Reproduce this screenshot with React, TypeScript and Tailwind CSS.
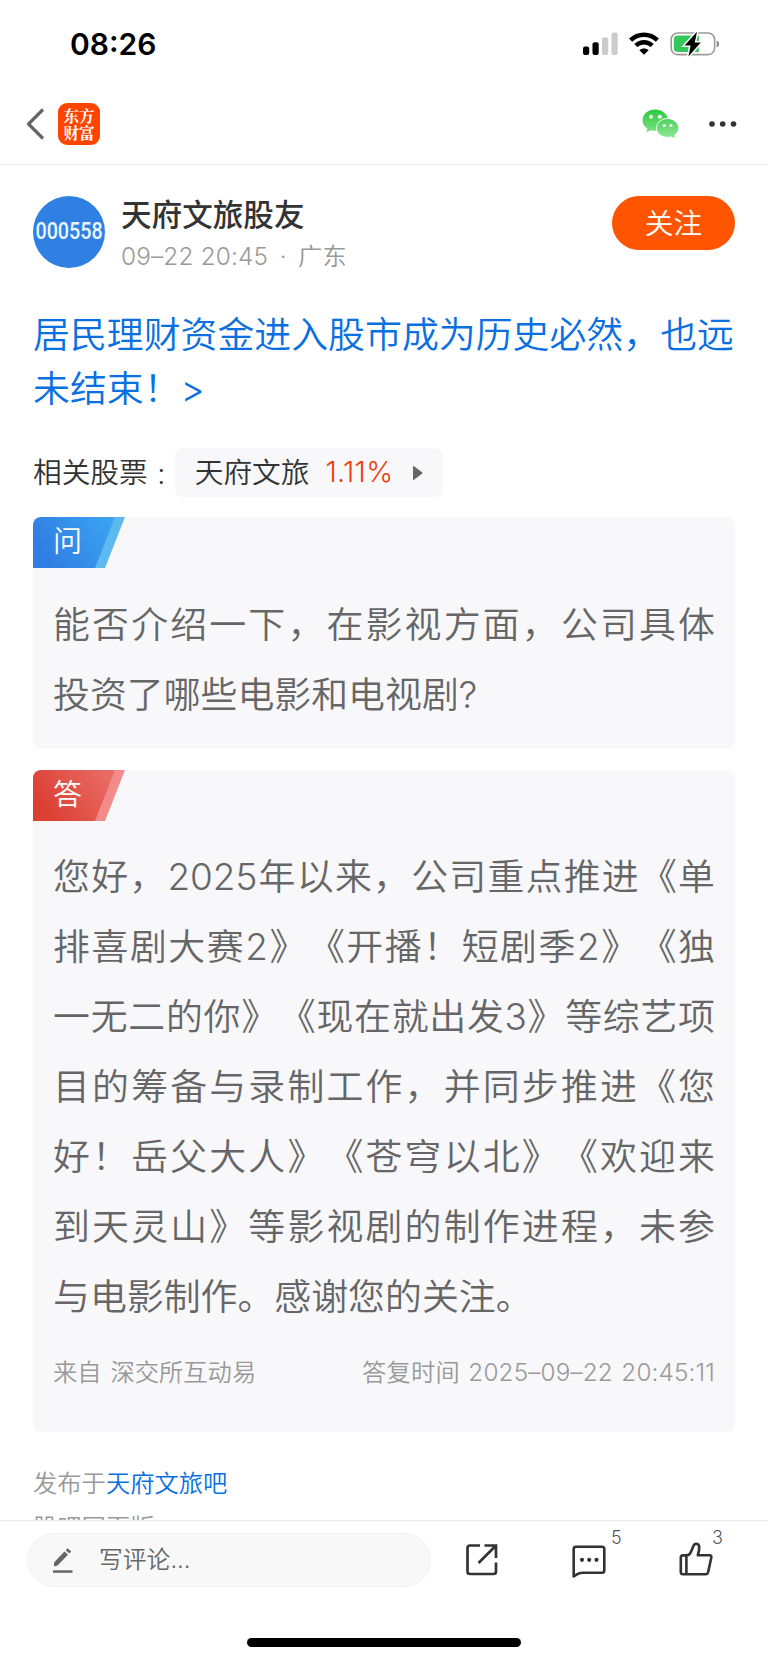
import React from "react";

function SignalIcon() {
  return (
    <svg width="36" height="24" viewBox="0 0 36 24">
      <rect x="1" y="14.5" width="6.2" height="8.5" rx="2" fill="#000" />
      <rect x="10.5" y="10.2" width="6.2" height="12.8" rx="2" fill="#000" />
      <rect x="20" y="5.3" width="6.2" height="17.7" rx="2" fill="#ccc" />
      <rect x="29.5" y="0.5" width="6.2" height="22.5" rx="2" fill="#ccc" />
    </svg>
  );
}

function WifiIcon() {
  return (
    <svg width="30" height="24" viewBox="0 0 30 24" fill="none" stroke="#000" strokeWidth="4.4">
      <path d="M1.6 8.2C9.2 .9 20.8 .9 28.4 8.2" />
      <path d="M6.8 13.5C11.6 9.1 18.4 9.1 23.2 13.5" />
      <path d="M15 22.8L10.4 18.2C12.9 15.8 17.1 15.8 19.6 18.2Z" fill="#000" stroke="none" />
    </svg>
  );
}

function BatteryIcon() {
  return (
    <svg width="50" height="26" viewBox="0 0 50 26">
      <rect x="1.2" y="2" width="43.4" height="21.6" rx="6.5" fill="none" stroke="#9b9b9b" strokeWidth="1.6" />
      <path d="M46.6 9.4C50 10.4 50 15.4 46.6 16.4Z" fill="#8e8e8e" />
      <path d="M8 4.6H28.8V21H8Q3.8 21 3.8 17V8.600Q3.800 4.600 8 4.600Z" fill="#34c759" />
      <path d="M27 .8L14.600 14.500H20.600L18.400 25.400L30.800 11.400H24.800Z" fill="#000" stroke="#fff" strokeWidth="3" paintOrder="stroke" />
    </svg>
  );
}

function WechatIcon() {
  return (
    <svg width="37" height="30" viewBox="0 0 37 30">
      <defs>
        <linearGradient id="wx" x1="0" y1="0" x2="0" y2="30" gradientUnits="userSpaceOnUse">
          <stop offset="0" stopColor="#28c93a" />
          <stop offset="1" stopColor="#93e89a" />
        </linearGradient>
      </defs>
      <path d="M13.200 .5C6.200 .5 .5 5.200 .5 11.200C.5 14.600 2.400 17.600 5.400 19.500L4.300 23.400L8.800 21.200C10.200 21.600 11.700 21.800 13.200 21.800C20.200 21.800 25.900 17.100 25.900 11.200S20.200 .5 13.200 .5Z" fill="url(#wx)" />
      <path d="M25.500 9.900C19.600 9.900 14.900 13.900 14.900 18.900S19.600 27.900 25.500 27.900C26.800 27.900 28 27.700 29.200 27.400L33 29.200L32.200 26C34.700 24.300 36.300 21.800 36.300 18.900C36.300 13.900 31.500 9.900 25.500 9.900Z" fill="url(#wx)" stroke="#fff" strokeWidth="1.600" paintOrder="stroke" />
      <circle cx="9" cy="7.700" r="2" fill="#fff" />
      <circle cx="17.800" cy="7.700" r="2" fill="#fff" />
      <circle cx="22.200" cy="16.400" r="1.500" fill="#fff" />
      <circle cx="29" cy="16.400" r="1.500" fill="#fff" />
    </svg>
  );
}

function StatusBar() {
  return (
    <div className="flex h-[88px] items-center pl-[70px] pr-[48px]">
      <span className="text-[30px] font-semibold leading-none text-black">08:26</span>
      <div className="ml-auto flex items-center gap-[11px]">
        <SignalIcon />
        <WifiIcon />
        <BatteryIcon />
      </div>
    </div>
  );
}

function NavBar() {
  return (
    <header className="flex h-[77px] items-center border-b border-[#e6e6e6] pb-[4px] pl-[26px] pr-[30px]">
      <svg width="19" height="32" viewBox="0 0 19 32" fill="none" stroke="#666" strokeWidth="3.200">
        <path d="M17 1.500L2.500 16L17 30.500" strokeLinejoin="round" />
      </svg>
      <div className="ml-[13px] flex size-[42px] flex-col items-center justify-center rounded-[9px] bg-[#ff4400] font-[Noto_Serif_CJK_SC,Noto_Sans_CJK_SC,sans-serif] text-[15.500px] font-bold leading-[17.500px] text-white">
        <span>东方</span>
        <span>财富</span>
      </div>
      <div className="ml-auto">
        <WechatIcon />
      </div>
      <svg className="ml-[29px]" width="30" height="8" viewBox="0 0 30 8" fill="#333">
        <circle cx="4" cy="4" r="2.800" />
        <circle cx="14.700" cy="4" r="2.800" />
        <circle cx="25.500" cy="4" r="2.800" />
      </svg>
    </header>
  );
}

function Tag({ label, id, from, to, edge }: { label: string; id: string; from: string; to: string; edge: string }) {
  return (
    <div className="relative h-[51px] w-[92px]">
      <svg className="absolute inset-0" width="92" height="51" viewBox="0 0 92 51">
        <defs>
          <linearGradient id={id} x1="0" y1="0.400" x2="1" y2="0">
            <stop offset="0" stopColor={from} />
            <stop offset="1" stopColor={to} />
          </linearGradient>
        </defs>
        <path d="M70 0H92L72 51H50Z" fill={edge} />
        <path d="M0 0H82L62 51H0Z" fill={`url(#${id})`} />
      </svg>
      <span className="relative block pl-[20px] text-[29px] leading-[50px] text-white">{label}</span>
    </div>
  );
}

function Lines({ lines }: { lines: string[] }) {
  return (
    <div className="px-[20px] text-[36.900px] leading-[70px] text-[#666]">
      {lines.map((line, i) => (
        <p
          key={line}
          className={
            i < lines.length - 1
              ? "h-[70px] whitespace-nowrap [text-align-last:justify]"
              : "h-[70px] whitespace-nowrap"
          }
        >
          {line}
        </p>
      ))}
    </div>
  );
}

const answer = [
  "您好，2025年以来，公司重点推进《单",
  "排喜剧大赛2》《开播！短剧季2》《独",
  "一无二的你》《现在就出发3》等综艺项",
  "目的筹备与录制工作，并同步推进《您",
  "好！岳父大人》《苍穹以北》《欢迎来",
  "到天灵山》等影视剧的制作进程，未参",
  "与电影制作。感谢您的关注。",
];

function BottomBar() {
  return (
    <footer className="h-[142px] border-t border-[#ededed] bg-white pt-[12px]">
      <div className="flex h-[54px] items-center pl-[27px]">
        <div className="flex h-[54px] w-[404px] items-center rounded-full border border-[#f3f3f3] bg-[#f8f8f8] pl-[25px]">
          <svg width="20" height="28" viewBox="0 0 20 28" fill="#666">
            <path d="M1 20.500V16.500L11.500 5.500L15 8.700L4.500 19.500Z" />
            <path d="M12.700 4.300L14.700 2.200L18.200 5.400L16.200 7.500Z" />
            <rect x="0" y="24.300" width="19.500" height="2.500" />
          </svg>
          <span className="ml-[26px] text-[23.800px] leading-none text-[#666]">写评论...</span>
        </div>
        <svg className="ml-[34px]" width="34" height="34" viewBox="0 0 34 34" fill="none" stroke="#333" strokeWidth="2.700">
          <path d="M15 2.500H5Q2.500 2.500 2.500 5V28.500Q2.500 31 5 31H28.500Q31 31 31 28.500V19.500" />
          <path d="M19.500 2.500H31V15M31 2.500L13.500 20" />
        </svg>
        <div className="relative ml-[72px] h-[36px] w-[36px]">
          <svg className="absolute left-0 top-0" width="36" height="36" viewBox="0 0 36 36" fill="none" stroke="#333" strokeWidth="2.600">
            <path d="M2.700 34V7Q2.700 4.700 5 4.700H31Q33.300 4.700 33.300 7V28.500Q33.300 30.800 31 30.800H12Q8 30.800 5.500 32.600L2.700 34.500Z" strokeLinejoin="round" />
            <g fill="#333" stroke="none">
              <circle cx="11" cy="17.800" r="2.100" />
              <circle cx="18.200" cy="17.800" r="2.100" />
              <circle cx="25.500" cy="17.800" r="2.100" />
            </g>
          </svg>
          <span className="absolute left-[40px] top-[-15px] text-[18px] leading-[22px] text-[#555]">5</span>
        </div>
        <div className="relative ml-[71px] h-[36px] w-[36px]">
          <svg className="absolute left-0 top-0" width="36" height="36" viewBox="0 0 36 36" fill="none" stroke="#333" strokeWidth="2.600" strokeLinejoin="round">
            <path d="M9 13.400H5Q2.800 13.400 2.800 15.600V30Q2.800 32.300 5 32.300H27.500Q29.600 32.300 30.100 30.300L33.300 15.500Q33.700 13.200 31.500 13.200H19.800Q21.500 8.500 21.200 4.500Q20.800 1.800 18.300 1.800Q16.300 1.800 15.300 4.300Q13.500 9 12.300 11.200Q11.200 13.400 8.400 13.400V32.300" />
          </svg>
          <span className="absolute left-[34px] top-[-15px] text-[18px] leading-[22px] text-[#555]">3</span>
        </div>
      </div>
      <div className="mx-auto mt-[51px] h-[9px] w-[274px] rounded-full bg-black" />
    </footer>
  );
}

export default function App() {
  return (
    <div
      lang="zh-CN"
      className="flex h-[1662px] w-[768px] flex-col overflow-hidden bg-white font-[Inter,Noto_Sans_CJK_SC,sans-serif] font-[350] [text-spacing-trim:space-all]"
    >
      <StatusBar />
      <NavBar />
      <main className="h-[1355px] overflow-hidden px-[33px] pt-[31px]">
        <section className="flex h-[72px]">
          <div className="flex size-[72px] items-center justify-center rounded-full bg-[#3080e4]">
            <span className="origin-center scale-x-[0.840] font-[Roboto,sans-serif] text-[23.500px] font-medium leading-none text-[#eaf6ff]">000558</span>
          </div>
          <div className="ml-[16px]">
            <div className="text-[30.600px] font-medium leading-[38px] text-[#333]">天府文旅股友</div>
            <div className="mt-[3px] text-[24.300px] leading-[38px] text-[#999]">
              <span className="tracking-[0.200px]">09–22 20:45</span>
              <span className="inline-block w-[30px] text-center">·</span>广东
            </div>
          </div>
          <button className="ml-auto h-[54px] w-[123px] rounded-full bg-[#ff5500] text-[28.700px] leading-[55px] text-white">关注</button>
        </section>
        <h1 className="mt-[40px] whitespace-nowrap text-[36.900px] leading-[54px] text-[#0a6fe0]">
          居民理财资金进入股市成为历史必然，也远
          <br />
          未结束！&gt;
        </h1>
        <div className="mt-[32px] flex h-[49px] items-center text-[28.700px] leading-none text-[#333]">
          <span className="pt-px">相关股票</span>
          <span className="w-[27px] pt-[3px] text-center">:</span>
          <div className="flex h-[49px] w-[268px] items-center rounded-[8px] bg-[#f8f8fb] pl-[20px]">
            <span className="pt-px">天府文旅</span>
            <span className="ml-[16px] tracking-[0.300px] text-[#ea3f0c]">1.11%</span>
            <svg className="ml-auto mr-[20px]" width="11" height="16" viewBox="0 0 11 16">
              <path d="M1 1.500Q1 .5 2 1.200L10 7.300Q10.600 8 10 8.700L2 14.800Q1 15.500 1 14.500Z" fill="#666" />
            </svg>
          </div>
        </div>
        <section className="mt-[20px] h-[232px] overflow-hidden rounded-[8px] bg-[#f8f8fb]">
          <Tag label="问" id="tag-q" from="#317ee2" to="#3ba6f2" edge="#5dbaf0" />
          <div className="h-[22px]" />
          <Lines lines={["能否介绍一下，在影视方面，公司具体", "投资了哪些电影和电视剧?"]} />
        </section>
        <section className="mt-[21px] h-[662px] overflow-hidden rounded-[8px] bg-[#f8f8fb]">
          <Tag label="答" id="tag-a" from="#dc4033" to="#ea716b" edge="#f48b8b" />
          <div className="h-[21px]" />
          <Lines lines={answer} />
          <div className="mt-[22px] flex justify-between px-[20px] text-[24.300px] leading-[36px] text-[#999]">
            <span className="[word-spacing:2px]">来自 深交所互动易</span>
            <span className="tracking-[0.150px] [word-spacing:1.500px]">答复时间 2025–09–22 20:45:11</span>
          </div>
        </section>
        <div className="mt-[29px] text-[24.300px] leading-[44px] text-[#999]">
          <p>
            发布于<span className="text-[#0a6fe0]">天府文旅吧</span>
          </p>
          <p>股吧网页版</p>
        </div>
      </main>
      <BottomBar />
    </div>
  );
}
